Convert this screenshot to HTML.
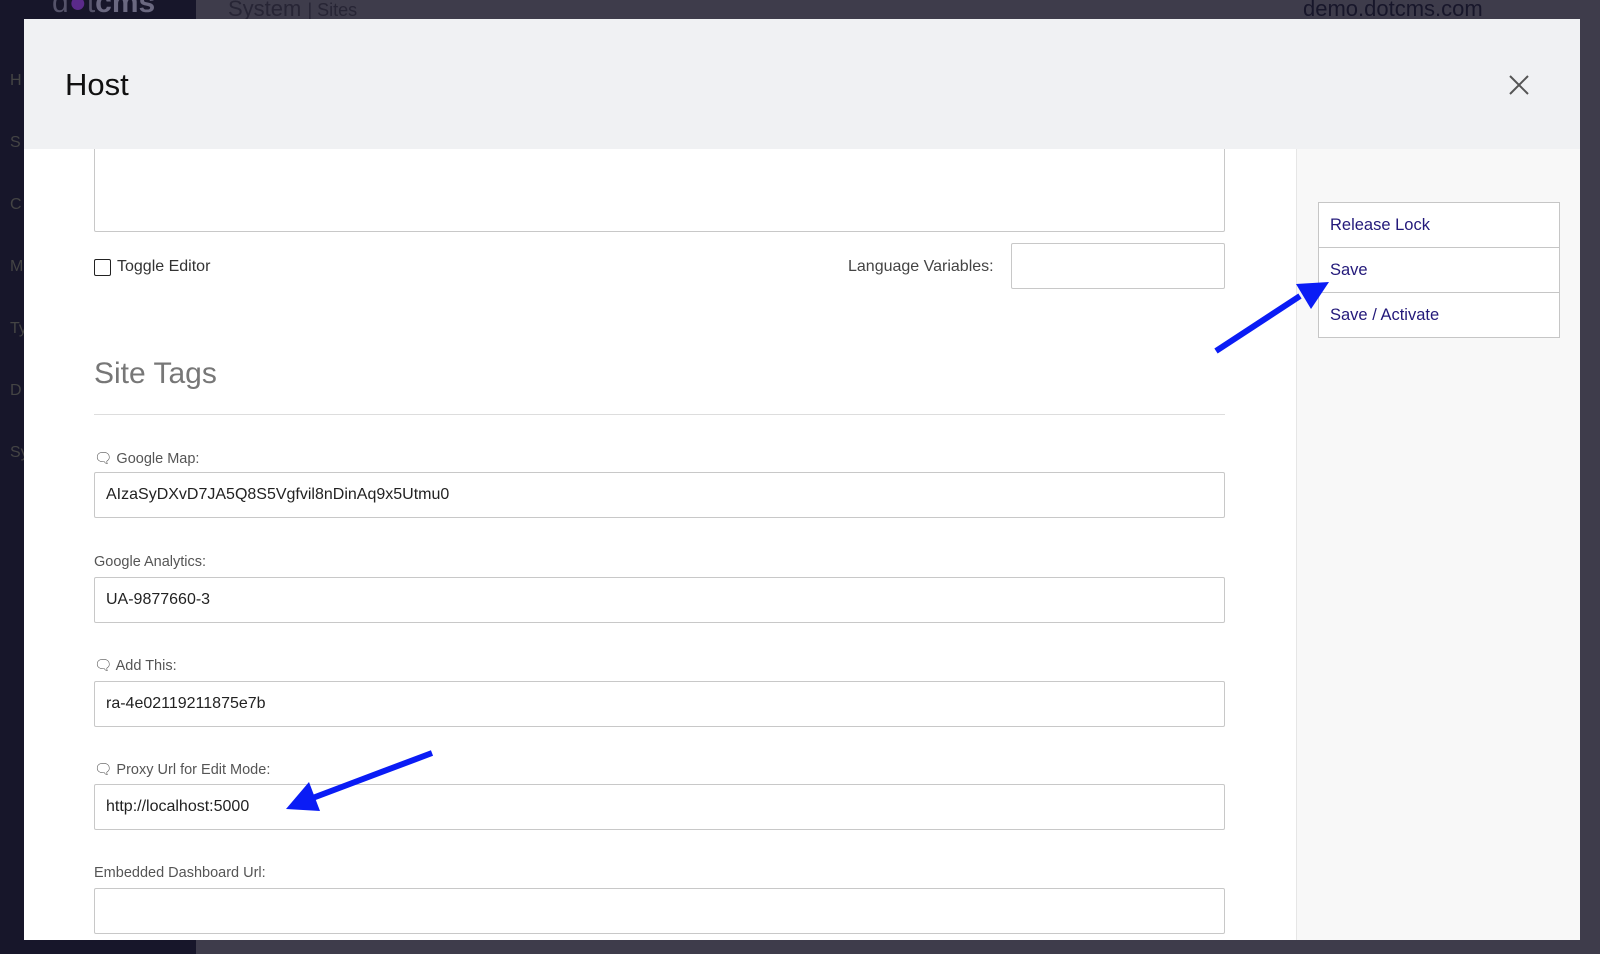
<!DOCTYPE html>
<html><head><meta charset="utf-8"><style>
*{box-sizing:border-box;margin:0;padding:0}
body{width:1600px;height:954px;overflow:hidden;position:relative;background:#3e3c4b;font-family:"Liberation Sans",sans-serif}
.abs{position:absolute}
.side{left:0;top:0;width:196px;height:954px;background:#17162a}
.modal{left:24px;top:19px;width:1556px;height:921px;background:#fff;overflow:hidden}
.hdr{left:0;top:0;width:1556px;height:130px;background:#f0f1f3;z-index:5}
.title{left:41px;top:48px;font-size:31px;color:#111;z-index:6}
.rs{left:1272px;top:130px;width:284px;height:800px;background:#f8f8f8;border-left:1px solid #e6e6e6}
.inp{position:absolute;left:70px;width:1131px;height:46px;border:1px solid #c8c8c8;border-radius:2px;background:#fff;font-size:16px;color:#222;padding:13px 11px}
.lbl{position:absolute;left:70px;font-size:14.5px;color:#555}
.btn{position:absolute;left:1294px;width:242px;height:46px;border:1px solid #c6c6c6;background:#fff;color:#23197a;font-size:16.5px;padding:13px 11px}
</style></head><body>
<div class="abs side"></div>
<div class="abs" style="left:52px;top:-14px;font-size:30px;color:#55536a">d<span style="color:#5a2a8a">●</span>t<b style="color:#6a6880">cms</b></div>
<div class="abs" style="left:228px;top:-4px;font-size:22px;color:#272535">System <span style="font-size:18px">| Sites</span></div>
<div class="abs" style="left:1303px;top:-4px;font-size:22px;color:#17162a">demo.dotcms.com</div>
<div class="abs" style="left:10px;top:50px;color:#444;font-size:16px;line-height:62px">H<br>S<br>C<br>M<br>Ty<br>D<br>Sy</div>
<div class="abs modal">
 <div class="abs hdr"></div>
 <div class="abs title">Host</div>
 <svg class="abs" style="left:1484px;top:55px;z-index:6" width="22" height="22"><path d="M2 2L20 20M20 2L2 20" stroke="#555" stroke-width="2"/></svg>
 <div class="abs rs"></div>
 <div class="inp" style="top:110px;height:103px"></div>
 <div class="abs" style="left:70px;top:240px;width:17px;height:17px;border:1.5px solid #222;border-radius:2px"></div>
 <div class="abs" style="left:93px;top:239px;font-size:16px;color:#333">Toggle Editor</div>
 <div class="abs" style="left:824px;top:239px;font-size:16px;color:#444">Language Variables:</div>
 <div class="inp" style="left:987px;width:214px;top:224px"></div>
 <div class="abs" style="left:70px;top:338px;font-size:30px;color:#777">Site Tags</div>
 <div class="abs" style="left:70px;top:395px;width:1131px;height:1px;background:#ddd"></div>
 <div class="lbl" style="top:431px">🗨︎ Google Map:</div>
 <div class="inp" style="top:453px">AIzaSyDXvD7JA5Q8S5Vgfvil8nDinAq9x5Utmu0</div>
 <div class="lbl" style="top:535px">Google Analytics:</div>
 <div class="inp" style="top:558px">UA-9877660-3</div>
 <div class="lbl" style="top:638px">🗨︎ Add This:</div>
 <div class="inp" style="top:662px">ra-4e02119211875e7b</div>
 <div class="lbl" style="top:742px">🗨︎ Proxy Url for Edit Mode:</div>
 <div class="inp" style="top:765px">http://localhost:5000</div>
 <div class="lbl" style="top:846px">Embedded Dashboard Url:</div>
 <div class="inp" style="top:869px"></div>
 <div class="btn" style="top:183px">Release Lock</div>
 <div class="btn" style="top:228px">Save</div>
 <div class="btn" style="top:273px">Save / Activate</div>
</div>
<svg class="abs" style="left:0;top:0" width="1600" height="954">
 <path d="M1216 351L1300 296" stroke="#0a1cf5" stroke-width="6"/>
 <polygon points="1329,282 1296,284 1311,309" fill="#0a1cf5"/>
 <path d="M432 753L310 799" stroke="#0a1cf5" stroke-width="6"/>
 <polygon points="286,809 309,782 320,811" fill="#0a1cf5"/>
</svg>
</body></html>
